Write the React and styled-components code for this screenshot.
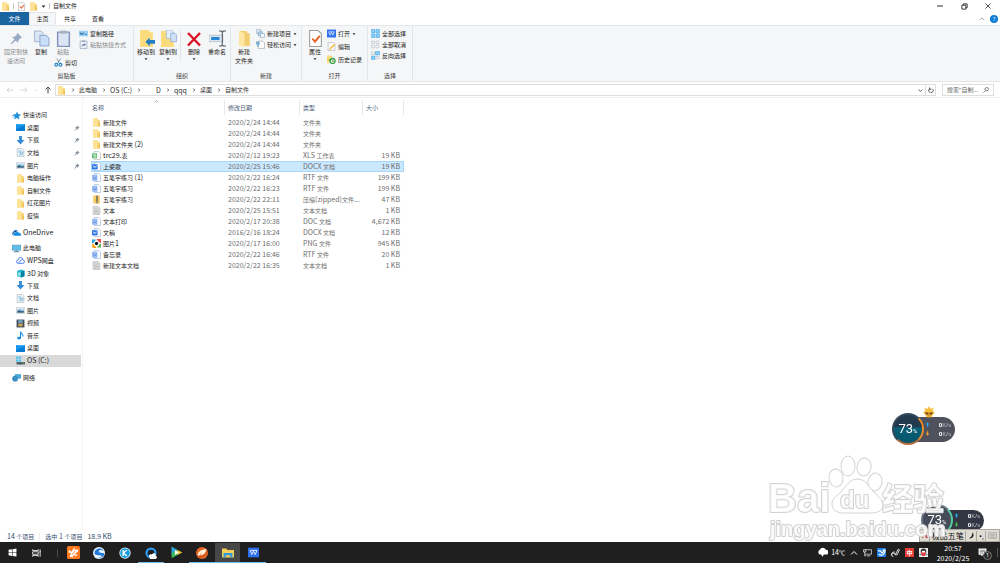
import React, { useState } from "react";
import styled, { createGlobalStyle, css } from "styled-components";

const GlobalStyle = createGlobalStyle`
  * { box-sizing: border-box; }
  body {
    margin: 0;
    background: #ffffff;
    color: #222222;
    font-family: "Open Sans", "Noto Sans CJK SC", sans-serif;
    font-size: 6px;
    line-height: 8px;
    overflow: hidden;
  }
  button, input {
    font: inherit;
    color: inherit;
    background: none;
    border: none;
    padding: 0;
    margin: 0;
  }
  button { white-space: nowrap; }
  svg { display: block; flex: none; }
  ul { list-style: none; margin: 0; padding: 0; }
`;

/* every drawing uses a 16 x 16 box */
const drawings = {
  folder: (
    <>
      <path d="M2 1h8l1 3h3v11H2z" fill="#f5cf69" />
      <path d="M2 1h8v14H2z" fill="#ffe397" />
      <path d="M12 9h2v6h-2z" fill="#e9bb4c" />
    </>
  ),
  bigFolder: (
    <>
      <path d="M3 1h7l1 2h2v12H3z" fill="#f2cf70" />
      <path d="M3 1l5 2v13l-5-1z" fill="#ffe8a4" />
    </>
  ),
  checkDoc: (
    <>
      <path d="M2.500 .5h8l3 3v12h-11z" fill="#fff" stroke="#9b9b9b" />
      <path d="M5 8l2.500 3L12 5.500" fill="none" stroke="#e8622a" strokeWidth="1.800" />
    </>
  ),
  pinBig: <path d="M9 1l6 6-2 .5-2.500 2.500-.5 3.500-3-3L2 15l-1-1 4.500-5-3-3L6 5.500 8.500 3z" fill="#9aaac3" />,
  pin: <path d="M9 1l6 6-2 .5-2 2-.5 3.500-3-3L2 15l-1-1 5-5.500-3-3 3.500-.5 2-2z" fill="#86919c" />,
  copy: (
    <>
      <path d="M1.500 1h6l2 2v8h-8z" fill="#dce8f7" stroke="#98abc8" strokeWidth=".8" />
      <path d="M6.500 5h6l2.500 2.500V15H6.500z" fill="#c8ddf8" stroke="#809ac6" strokeWidth=".8" />
    </>
  ),
  paste: (
    <>
      <path d="M2.500 2h11v13.500h-11z" fill="#dbe6f4" stroke="#8494bd" strokeWidth="1.400" />
      <path d="M5 .5h6v3H5z" fill="#a8b3c5" />
    </>
  ),
  path: (
    <>
      <path d="M0 3h16v10H0z" fill="#9bd0f4" />
      <path d="M2 6l1.500 4L5 7l1.500 3L8 6M9 9.500h1M11 9.500h3" stroke="#1c5f91" fill="none" strokeWidth="1.300" />
    </>
  ),
  shortcut: (
    <>
      <path d="M2 2h12v13H2z" fill="#eef3fa" stroke="#7f91af" />
      <path d="M5 12c0-4 2-5 5-5V5l2 3-3 3V9" fill="#637ca7" />
      <path d="M5 1h6v2H5z" fill="#8c99b0" />
    </>
  ),
  cut: (
    <>
      <path d="M5 1l5 9M12 1L6 10" stroke="#5f7384" strokeWidth="1.300" fill="none" />
      <circle cx="4" cy="12" r="2.500" fill="none" stroke="#1f86c8" strokeWidth="2" />
      <circle cx="11.500" cy="12" r="2.500" fill="none" stroke="#1f86c8" strokeWidth="2" />
    </>
  ),
  moveTo: (
    <>
      <path d="M2 0h8l1 2h3v14H2z" fill="#fbdc7d" />
      <path d="M7 11l4-4v2.500h5v3.500h-5v2.500z" fill="#257fc4" />
    </>
  ),
  copyTo: (
    <>
      <path d="M1 1h7l1 2h4v13H1z" fill="#fbdc7d" />
      <path d="M6 0h5l1.500 1.500V8H6z" fill="#e5effc" stroke="#8faed8" strokeWidth=".6" />
      <path d="M10 3h4l1.500 1.500V11H10z" fill="#cfe1f7" stroke="#7d9ecf" strokeWidth=".6" />
    </>
  ),
  remove: <path d="M2 2l12 12.500M14 2L2 14.500" stroke="#d81324" strokeWidth="2.400" fill="none" />,
  rename: (
    <>
      <path d="M0 5h13v6H0z" fill="#e8eef5" stroke="#9fabb7" strokeWidth=".6" />
      <path d="M2 6.500h8v3H2z" fill="#2887d5" />
      <path d="M9.500 1h2l1 1 1-1H16M9.500 15h2l1-1 1 1H16M12.500 2v12" stroke="#4b545e" fill="none" />
    </>
  ),
  newItem: (
    <>
      <path d="M1 1h8v7H1z" fill="#eef4fa" stroke="#7f9db8" />
      <path d="M4 5h7v7H4z" fill="#b5dbf2" stroke="#5f8eb4" />
      <path d="M8 8h7v7H8z" fill="#f7fafc" stroke="#7f9db8" />
    </>
  ),
  easyAccess: (
    <>
      <path d="M4 2h8l3 3v10H4z" fill="#fff" stroke="#8d979f" />
      <path d="M0 4h6M0 7h4" stroke="#237ab6" strokeWidth="1.500" />
      <path d="M4 12a4 4 0 0 1 3-6" fill="none" stroke="#2a86c8" strokeWidth="1.500" />
    </>
  ),
  wps: (
    <>
      <path d="M0 1h16v14H0z" fill="#2e70ee" />
      <path d="M3 5l2.500 6L8 6l2.500 5L13 5M3 5h10" fill="none" stroke="#fff" strokeWidth="1.200" />
    </>
  ),
  edit: (
    <>
      <path d="M2 1h9l3 3v11H2z" fill="#fff" stroke="#9ba3aa" />
      <path d="M4 14l1-4 8-7 2 2-8 8z" fill="#f4bf4f" />
    </>
  ),
  history: (
    <>
      <path d="M0 1h9v13H0z" fill="#f9d978" />
      <circle cx="10" cy="10.500" r="4.500" fill="#d8efd2" stroke="#39a24a" strokeWidth="2" />
      <path d="M3 7l5 1-3 4z" fill="#39a24a" />
      <path d="M10 7.500V11h3" fill="none" stroke="#246b34" />
    </>
  ),
  selectAll: <path d="M1 1h6v6H1zM9 1h6v6H9zM1 9h6v6H1zM9 9h6v6H9z" fill="#8ad0fb" stroke="#3aa1e6" />,
  selectNone: <path d="M1 2h5v4H1zM9 2h5v4H9zM1 9h5v5H1zM9 9h5v5H9z" fill="#fff" stroke="#a5adb4" />,
  invert: (
    <>
      <path d="M1 9h6v6H1zM8 1h7v6H8z" fill="#8ad0fb" stroke="#3aa1e6" />
      <path d="M1 2h5v4H1zM9 10h5v4H9z" fill="#fff" stroke="#a5adb4" />
    </>
  ),
  star: (
    <>
      <path d="M9 1l2 4.500 5 .5-4 4 1 5-4.500-2.500L4 15l1-5-3-4 5-.5z" fill="#2491da" />
      <path d="M0 8h4M1 11h3" stroke="#2491da" />
    </>
  ),
  desktop: (
    <>
      <path d="M0 2h16v12H0z" fill="#1597ee" />
      <path d="M0 11L16 4v10H0z" fill="#087dd4" />
    </>
  ),
  download: <path d="M5.500 0h5v7H15l-7 8-7-8h4.500z" fill="#348bd6" />,
  document: (
    <>
      <path d="M2 1h9l3 3v11H2z" fill="#f5f8fa" stroke="#9fabb4" />
      <path d="M4 5h5M4 7.500h3M8 7h4v3H8zM5 12h7" stroke="#4b9bc9" fill="none" />
    </>
  ),
  picture: (
    <>
      <path d="M.5 3h15v10H.5z" fill="#f6f9fb" stroke="#a7b2bb" />
      <path d="M2 5h12v3H2z" fill="#a1d0ef" />
      <path d="M2 9l4-2 4 2 4-1v4H2z" fill="#376782" />
    </>
  ),
  oneDrive: (
    <>
      <path d="M2 13a3.500 3.500 0 0 1 0-6 5 5 0 0 1 8-2L6 13z" fill="#0d5ba8" />
      <path d="M5 14a3 3 0 0 1 1-6 4 4 0 0 1 7 1 2.500 2.500 0 0 1 2 5z" fill="#168ade" stroke="#fff" strokeWidth=".7" />
    </>
  ),
  computer: (
    <>
      <path d="M0 2h16v9H0z" fill="#60bce9" stroke="#4287ad" strokeWidth=".8" />
      <path d="M6 11h4v2h3v1.500H3V13h3z" fill="#6b91a8" />
    </>
  ),
  cloud: <path d="M4 13a3 3 0 0 1 0-6c0-6 8-6 8 0a3 3 0 0 1 0 6zM5 12l5-6" fill="none" stroke="#3773ed" strokeWidth="1.600" />,
  cube: (
    <>
      <path d="M2 3l8-2 5 2v10l-5 2-8-2z" fill="#25b9cf" />
      <path d="M9 5l6-2v10l-6 2z" fill="#087f9f" />
      <path d="M4 6h4v6H4z" fill="#a3e9ee" />
    </>
  ),
  video: (
    <>
      <path d="M1 1h14v14H1z" fill="#414b58" />
      <path d="M4 2h8v5H4z" fill="#719fc3" />
      <path d="M4 8h8v5H4z" fill="#c6a35b" />
    </>
  ),
  music: (
    <>
      <ellipse cx="5.500" cy="12.500" rx="3.500" ry="2.500" fill="#1687e0" />
      <path d="M8 12V1c1 4 6 4 4 9" fill="none" stroke="#1687e0" strokeWidth="1.800" />
    </>
  ),
  drive: (
    <>
      <path d="M1 11h15v4H1z" fill="#455158" />
      <path d="M0 1h4v4H0zM5 1h4v4H5zM0 6h4v4H0zM5 6h4v4H5z" fill="#4fc3ef" />
      <path d="M11 13h3" stroke="#6be26b" />
    </>
  ),
  network: (
    <>
      <path d="M5 2h11v8H5z" fill="#4aa9dc" />
      <circle cx="5.500" cy="10" r="5" fill="#277eb6" />
      <path d="M1 9c4-3 5 0 8-2M3 13c3-3 4 0 7-3" fill="none" stroke="#7bc9ec" />
    </>
  ),
  sheetFile: (
    <>
      <path d="M4 1h8l3 3v11H4z" fill="#fff" stroke="#a2aaa2" />
      <path d="M0 4h9v9H0z" fill="#61bd72" />
      <path d="M7 6H3v2.500h4V11H2" fill="none" stroke="#fff" />
    </>
  ),
  docxFile: (
    <>
      <path d="M4 1h8l3 3v11H4z" fill="#fff" stroke="#8fa5ce" />
      <path d="M0 4h10v9H0z" fill="#2870e8" />
      <path d="M2 6l1.500 4L5 7l1.500 3L8 6" fill="none" stroke="#fff" />
    </>
  ),
  rtfFile: (
    <>
      <path d="M4 1h8l3 3v11H4z" fill="#fff" stroke="#8aa6d6" />
      <path d="M1 4h8v9H1z" fill="#a8c7fb" stroke="#719fe9" />
      <path d="M3 6v4h4V6" fill="none" stroke="#4379cd" />
    </>
  ),
  zipFile: (
    <>
      <path d="M2 1h12v14H2z" fill="#f6cf69" />
      <path d="M7 1h4v14H7z" fill="#a89664" />
      <path d="M7.500 3h3M7.500 6h3M7.500 9h3" stroke="#4d5461" />
    </>
  ),
  textFile: (
    <>
      <path d="M2 1h9l3 3v11H2z" fill="#dedede" stroke="#adadad" />
      <path d="M4 5h7M4 7.500h8M4 10h8M4 12.500h8" stroke="#b1b1b1" />
    </>
  ),
  imageFile: (
    <>
      <path d="M0 1h7L4 7H0z" fill="#27a9de" />
      <path d="M8 0h8v7l-5-2z" fill="#f04a40" />
      <path d="M0 8l5 1 3 7H1z" fill="#f8a21c" />
      <path d="M16 8v7H9l2-5z" fill="#5bb952" />
      <circle cx="8" cy="8" r="5" fill="#fff" />
      <circle cx="8" cy="8" r="3" fill="#111" />
    </>
  ),
  windows: <path d="M1 3l6-1v5.500H1zM8 2l7-1v6.500H8zM1 8.500h6V14l-6-1zM8 8.500h7V15l-7-1z" fill="#fff" />,
  taskView: <path d="M1 2v2h9V2M1 14v-2h9v2M1 6h9v4H1zM13 2v12M12 6h2" fill="none" stroke="#fff" strokeWidth="1.300" />,
  uc: (
    <>
      <rect width="16" height="16" rx="2" fill="#ff781e" />
      <path d="M2 5l4 2c1-2 1-4 4-5L9 5l4-1c2 3-1 4-3 5l3 2-3 2-2-2-1 3-4-1 2-4-3-1z" fill="#fff" />
      <path d="M10 6l-4 5M11 10l-2 2" stroke="#f27519" />
    </>
  ),
  browser: (
    <>
      <circle cx="8" cy="8" r="8" fill="#e8f6ff" />
      <path d="M2 8c0-6 9-8 12-3-7-3-9 3-1 3 5 0 0 8-6 6 7-1 5-3 0-3-3 0-5-1-5-3z" fill="#2679d9" />
    </>
  ),
  kugou: (
    <>
      <circle cx="8" cy="8" r="7.500" fill="#fff" />
      <circle cx="8" cy="8" r="6.500" fill="#149bdd" />
      <path d="M5.500 4v8M10.500 4L6 8l4.500 4" stroke="#fff" strokeWidth="1.800" fill="none" />
    </>
  ),
  qqBrowser: (
    <>
      <circle cx="8" cy="8" r="6" fill="none" stroke="#2b9af0" strokeWidth="3" />
      <path d="M6 14c-2-3 1-5 3-4 3-4 7 0 5 2 4 1 1 4-1 4H7z" fill="#fff" />
    </>
  ),
  player: (
    <>
      <path d="M2 1l13 7-13 7z" fill="#39bb55" />
      <path d="M2 1l7 4-5 2-2 4z" fill="#2a9ee8" />
      <path d="M9 5l6 3-6 3z" fill="#f6b52a" />
      <path d="M6 5l5 3-5 3z" fill="#fff" />
    </>
  ),
  orange: (
    <>
      <circle cx="8" cy="8" r="8" fill="#e76522" />
      <path d="M2 10c2-5 6-7 12-7-1 5-4 8-8 8l2-4-4 5z" fill="#fff0d9" />
      <path d="M4 13c5 1 9-3 11-8" fill="none" stroke="#ab391b" />
    </>
  ),
  explorer: (
    <>
      <path d="M0 2h6l1 2h9v10H0z" fill="#f7ce58" />
      <path d="M2 8h12v6h-3v-3H5v3H2z" fill="#2f9bdc" />
    </>
  ),
  weather: <path d="M4 11a4 4 0 0 1 0-7c2-4 7-4 9 0a3.500 3.500 0 0 1 0 7h-3l-2 3-2-3z" fill="#fff" />,
  monitor: <path d="M4 3h11v8H4M7 14h6M1 3h4v4H1zM3 7v7h3" fill="none" stroke="#fff" strokeWidth="1.200" />,
  bluePlug: (
    <>
      <rect width="16" height="16" rx="2" fill="#2181e8" />
      <path d="M2 5h4l3 4c3-1 3-4 2-5l3-1v4c-1 6-7 7-11 4" fill="none" stroke="#fff" strokeWidth="2" />
    </>
  ),
  pen: <path d="M8 11l5-9 2 1-4 9H7a3 3 0 1 0-3 3M7 7C2 7 1 10 1 12" fill="none" stroke="#fff" strokeWidth="1.500" />,
  mascot: (
    <>
      <rect width="16" height="16" rx="1" fill="#f0f0f0" />
      <circle cx="8" cy="6" r="5" fill="#333" />
      <path d="M3 7h10l-2 7H5z" fill="#e43d43" />
      <path d="M5 5h6v3H5z" fill="#fff" />
      <path d="M1 10h3v3H1zM12 10h3v3h-3z" fill="#479d99" />
    </>
  ),
  notice: (
    <>
      <path d="M1 1h14v11H9l-3 3v-3H1z" fill="#fff" />
      <path d="M3 4h10M3 6.500h10M3 9h6" stroke="#333" />
    </>
  ),
  back: <path d="M15 8H2M7 3L2 8l5 5" fill="none" stroke="currentColor" strokeWidth="1.500" />,
  forward: <path d="M1 8h13M9 3l5 5-5 5" fill="none" stroke="currentColor" strokeWidth="1.500" />,
  up: <path d="M8 15V2M3 7l5-5 5 5" fill="none" stroke="currentColor" strokeWidth="2" />,
  right: <path d="M6 4l4 4-4 4" fill="none" stroke="currentColor" strokeWidth="2" />,
  down: <path d="M2 5l6 6 6-6" fill="none" stroke="currentColor" strokeWidth="2.500" />,
  chevronUp: <path d="M2 11l6-6 6 6" fill="none" stroke="currentColor" strokeWidth="2" />,
  caret: <path d="M2 5h12l-6 7z" fill="currentColor" />,
  refresh: <path d="M5 4a6 6 0 1 0 7 1M4 1v5h5" fill="none" stroke="currentColor" strokeWidth="2" />,
  search: <path d="M7 9l-6 6M7 9a4.500 4.500 0 1 1 6 0 4.500 4.500 0 0 1-6 0z" fill="none" stroke="currentColor" strokeWidth="2" />,
  minimize: <path d="M0 8h16" stroke="currentColor" strokeWidth="2.500" />,
  restore: <path d="M2 5h9v9H2zM5 5V2h9v9h-3" fill="none" stroke="currentColor" strokeWidth="2" />,
  close: <path d="M1 1l14 14M15 1L1 15" stroke="currentColor" strokeWidth="2" />,
  moon: <path d="M10 1c6 5 1 15-8 13 6-2 8-6 8-13z" fill="#111" />,
  keyboard: <path d="M1 3h14v10H1zM3 6h10M3 8.500h10M4 11h8" fill="none" stroke="#a4a4a4" strokeWidth="1.500" />,
  arrowUp: <path d="M8 1l6 7h-4v7H6V8H2z" fill="currentColor" />,
  arrowDown: <path d="M8 15l6-7h-4V1H6v7H2z" fill="currentColor" />,
  mascotStar: (
    <>
      <path d="M8 0l2 4 4-2-1 4 3 3-3 2-1 4H4l-1-4-3-2 3-3-1-4 4 2z" fill="#f9bd3a" />
      <path d="M3 9h4v2H4zM9 9h4l-1 2H9zM6 13h4" fill="#754217" stroke="#754217" strokeWidth=".6" />
    </>
  ),
};

const Icon = ({ name, size = 9 }) => (
  <svg width={size} height={size} viewBox="0 0 16 16" aria-hidden="true">
    {drawings[name]}
  </svg>
);

const Screen = styled.div`
  height: 100vh;
  display: flex;
  flex-direction: column;
`;

const TitleBar = styled.header`
  height: 12px;
  flex: none;
  display: flex;
  align-items: center;
  justify-content: space-between;
`;

const QuickTools = styled.div`
  display: flex;
  align-items: center;
  gap: 3px;
  padding-left: 1px;
`;

const Divider = styled.i`
  width: 1px;
  height: ${(p) => p.$height || 6}px;
  background: ${(p) => p.$color || "#c5c5c5"};
  flex: none;
`;

const WindowControls = styled.div`
  display: flex;
  width: 72px;

  button {
    flex: 1;
    display: flex;
    justify-content: center;
  }
`;

const TabBar = styled.nav`
  height: 13px;
  flex: none;
  display: flex;
  align-items: stretch;
`;

const Tab = styled.button`
  width: 28px;
  ${(p) => p.$file && css`
    width: 29px;
    background: #1b64a2;
    color: #ffffff;
  `}
  ${(p) => p.$active && css`
    width: 27px;
    background: #f5f6f7;
    border: 1px solid #e3e4e6;
    border-bottom: none;
  `}
`;

const TabTools = styled.div`
  margin-left: auto;
  display: flex;
  align-items: center;
  gap: 5px;
  padding-right: 2px;
  color: #8a8a8a;
`;

const Help = styled.button`
  width: 8px;
  height: 8px;
  border-radius: 50%;
  background: #0e7bd5;
  color: #ffffff;
  text-align: center;
`;

const Ribbon = styled.section`
  height: 57px;
  flex: none;
  display: flex;
  background: #f5f6f7;
  border-top: 1px solid #e6e7e8;
  border-bottom: 1px solid #e6e7e8;
`;

const Group = styled.div`
  width: ${(p) => p.$width}px;
  display: flex;
  flex-direction: column;
  padding: 3px 0 1px;
  border-right: 1px solid #e4e5e7;
`;

const GroupBody = styled.div`
  flex: 1;
  display: flex;
  align-items: flex-start;
  padding-left: 2px;
`;

const GroupTitle = styled.div`
  text-align: center;
  color: #444444;
`;

const BigButton = styled.button`
  width: ${(p) => p.$width || 22}px;
  display: flex;
  flex-direction: column;
  align-items: center;
  color: ${(p) => (p.$muted ? "#85888c" : "#222222")};

  span {
    line-height: 9px;
    white-space: pre;
  }
`;

const BigIcon = styled.div`
  height: 19px;
  display: flex;
  align-items: center;
`;

const SmallList = styled.div`
  display: flex;
  flex-direction: column;
  gap: ${(p) => p.$gap || 2}px;
  padding-left: ${(p) => p.$indent || 0}px;
`;

const SmallButton = styled.button`
  display: flex;
  align-items: center;
  gap: 2px;
  height: 9px;
  color: ${(p) => (p.$muted ? "#85888c" : "#222222")};
`;

const PasteColumn = styled.div`
  display: flex;
  flex-direction: column;
  align-items: flex-start;
  gap: 1px;
`;

const AddressRow = styled.div`
  flex: none;
  height: 16px;
  display: flex;
  align-items: center;
  padding: 1px 6px 0;
  gap: 6px;
  border-bottom: 1px solid #eeeeee;
`;

const History = styled.div`
  width: 46px;
  margin-right: -3px;
  display: flex;
  align-items: center;
  justify-content: space-between;
  color: #c8c8c8;

  button:last-child {
    color: #4b4b4b;
  }
`;

const AddressBox = styled.div`
  flex: 1;
  height: 12px;
  display: flex;
  align-items: center;
  border: 1px solid #dedede;
  padding-left: 1px;
  color: #333333;
`;

const Crumb = styled.div`
  display: flex;
  align-items: center;
  gap: 3px;
  margin-left: 4px;
  padding-left: ${(p) => p.$indent || 0}px;
`;

const AddressActions = styled.div`
  margin-left: auto;
  display: flex;
  align-items: center;
  gap: 2px;
  padding-right: 1px;
`;

const SearchBox = styled.label`
  width: 52px;
  height: 12px;
  display: flex;
  align-items: center;
  padding: 0 4px;
  border: 1px solid #dedede;
  color: #555555;

  input {
    flex: 1;
    min-width: 0;
    outline: none;
  }
  input::placeholder {
    color: #666666;
    opacity: 1;
  }
`;

const Main = styled.main`
  flex: 1;
  min-height: 0;
  display: flex;
`;

const Sidebar = styled.nav`
  width: 83px;
  flex: none;
  padding: 11px 1px 0 0;
  display: flex;
  flex-direction: column;
  gap: 4px;
  border-right: 1px solid #f4f4f4;
`;

const Tree = styled.ul`
  height: ${(p) => p.$height}px;
  flex: none;
  display: flex;
  flex-direction: column;

  li {
    flex: 1;
    display: flex;
  }
`;

const TreeItem = styled.button`
  flex: 1;
  display: flex;
  align-items: center;
  gap: 2px;
  padding: 0 0 0 ${(p) => (p.$root ? 12 : 16)}px;
  background: ${(p) => (p.$active ? "#d9d9d9" : "none")};

  svg:nth-of-type(2) {
    margin: 0 1px 0 auto;
  }
`;

const FileArea = styled.section`
  flex: 1;
  padding-left: 8px;
`;

const FileTable = styled.table`
  width: 313px;
  table-layout: fixed;
  border-collapse: collapse;
`;

const HeadCell = styled.th`
  width: ${(p) => p.$width}px;
  height: 19px;
  padding: 0 0 0 ${(p) => p.$pad || 3}px;
  position: relative;
  text-align: left;
  font-weight: 400;
  color: #4c607a;
  background: linear-gradient(#e8e8e8, #e8e8e8) right center / 1px 15px no-repeat;
`;

const SortMark = styled.span`
  position: absolute;
  left: 63px;
  top: 1px;
  color: #777777;
`;

const FileRow = styled.tr`
  height: 11px;
  cursor: default;
  background: ${(p) => (p.$selected ? "#cce8ff" : "none")};
  outline: ${(p) => (p.$selected ? "1px solid #a5d6fb" : "none")};
  outline-offset: -1px;

  td {
    height: 11px;
    padding: 0 0 0 3px;
    color: #6d6d6d;
    white-space: nowrap;
  }
  td:nth-child(1) {
    padding-left: 1px;
  }
  td:nth-child(4) {
    text-align: right;
    padding-right: 4px;
  }
`;

const FileName = styled.div`
  display: flex;
  align-items: center;
  gap: 2px;
  color: #1b1b1b;
`;

const Latin = styled.span`
  font-family: "Noto Sans CJK SC", sans-serif;
  font-size: 7px;
`;

const StatusBar = styled.footer`
  height: 12px;
  flex: none;
  display: flex;
  align-items: center;
  gap: 5px;
  padding-left: 7px;
  color: #354b70;
`;

const Taskbar = styled.footer`
  height: 21px;
  flex: none;
  display: flex;
  align-items: stretch;
  background: #1f1f1f;
  color: #ffffff;
`;

const StartArea = styled.div`
  width: 61px;
  display: flex;
  align-items: center;
  padding-left: 8px;
  gap: 15px;
`;

const AppList = styled.div`
  width: 205px;
  display: flex;
`;

const TaskButton = styled.button`
  flex: 1;
  display: flex;
  align-items: center;
  justify-content: center;
  background: ${(p) => (p.$active ? "#474747" : "none")};
  border-bottom: 1px solid ${(p) => (p.$open ? "#76b9ed" : "transparent")};
  border-top: 1px solid transparent;
  background-clip: padding-box;
`;

const Tray = styled.div`
  margin-left: auto;
  display: flex;
  align-items: center;
  gap: 5px;
  padding-right: 2px;
`;

const Weather = styled.button`
  display: flex;
  align-items: center;
  gap: 3px;
`;

const ChineseMode = styled.button`
  width: 9px;
  height: 9px;
  background: #e83c34;
  color: #ffffff;
  font-weight: 700;
`;

const Clock = styled.time`
  width: 40px;
  text-align: center;
  font-family: "Noto Sans CJK SC", sans-serif;
  font-size: 7px;
  line-height: 10px;
`;

const NoticeButton = styled.button`
  position: relative;
  padding-right: 10px;
  border-right: 1px solid #555555;
`;

const NoticeCount = styled.span`
  position: absolute;
  left: 5px;
  top: 3px;
  width: 9px;
  height: 9px;
  border: 1px solid #777777;
  border-radius: 50%;
  background: #292929;
  line-height: 7px;
  text-align: center;
`;

const Gauge = styled.aside`
  position: fixed;
  right: ${(p) => p.$right}px;
  bottom: ${(p) => p.$bottom}px;
  display: flex;
  align-items: center;
  color: #ffffff;
`;

const Dial = styled.div`
  width: 32px;
  height: 32px;
  z-index: 1;
  border-radius: 50%;
  border: 2px solid ${(p) => (p.$dim ? "#687784" : "#35495b")};
  border-right-color: ${(p) => (p.$dim ? "#55c9a0" : "#e98b2b")};
  border-bottom-color: ${(p) => (p.$dim ? "#687784" : "#b46c38")};
  background: ${(p) => (p.$dim ? "#454b59" : "linear-gradient(#23394c 42%, #086078 46%, #07546c)")};
  display: flex;
  align-items: center;
  justify-content: center;
  font-family: Roboto, sans-serif;
  font-size: 13px;

  small {
    font-size: 6px;
    padding-top: 4px;
  }
`;

const Speeds = styled.div`
  width: 47px;
  height: ${(p) => (p.$dim ? 21 : 25)}px;
  margin-left: -16px;
  padding: 0 4px 0 17px;
  border-radius: 0 13px 13px 0;
  background: ${(p) => (p.$dim ? "#333743" : "#4f515d")};
  display: flex;
  flex-direction: column;
  justify-content: center;
  gap: 1px;
  color: #c5c7cc;

  div {
    display: flex;
    align-items: center;
    justify-content: space-between;
  }
  div:first-child svg { color: #28a5e9; }
  div:last-child svg { color: ${(p) => (p.$dim ? "#46bd58" : "#f39a28")}; }
  b { font-weight: 700; color: #ffffff; }
`;

const Companion = styled.span`
  position: absolute;
  left: 31px;
  top: -7px;
`;

const ImeBar = styled.aside`
  position: fixed;
  right: 0;
  bottom: 21px;
  width: 81px;
  height: 13px;
  display: flex;
  align-items: center;
  justify-content: space-between;
  padding: 0 2px;
  background: #dedbd3;
  border: 1px solid #aaa79e;
  color: #111111;
  font-size: 8px;

  strong {
    color: #c52530;
    font-family: "Liberation Serif", serif;
  }
`;

const Watermark = styled.div`
  position: fixed;
  right: 54px;
  bottom: 20px;
  pointer-events: none;
`;

const WatermarkArt = styled.svg`
  width: 178px;
  height: 88px;
  overflow: visible;

  text {
    font-family: "Liberation Sans", "Noto Sans CJK SC", sans-serif;
    font-weight: 700;
    paint-order: stroke;
    stroke: #d2d2d2;
    stroke-width: 2px;
    stroke-linejoin: round;
    fill: rgba(255, 255, 255, 0.85);
  }
`;

const quickItems = [
  { icon: "star", label: "快速访问", root: true },
  { icon: "desktop", label: "桌面", pinned: true },
  { icon: "download", label: "下载", pinned: true },
  { icon: "document", label: "文档", pinned: true },
  { icon: "picture", label: "图片", pinned: true },
  { icon: "folder", label: "电脑操作" },
  { icon: "folder", label: "自制文件" },
  { icon: "folder", label: "红花图片" },
  { icon: "folder", label: "疫情" },
];

const computerItems = [
  { icon: "computer", label: "此电脑", root: true },
  { icon: "cloud", label: "WPS网盘" },
  { icon: "cube", label: "3D 对象" },
  { icon: "download", label: "下载" },
  { icon: "document", label: "文档" },
  { icon: "picture", label: "图片" },
  { icon: "video", label: "视频" },
  { icon: "music", label: "音乐" },
  { icon: "desktop", label: "桌面" },
  { icon: "drive", label: "OS (C:)", active: true },
];

const files = [
  ["folder", "新建文件", "2020/2/24 14:44", "文件夹", ""],
  ["folder", "新建文件夹", "2020/2/24 14:44", "文件夹", ""],
  ["folder", "新建文件夹 (2)", "2020/2/24 14:44", "文件夹", ""],
  ["sheetFile", "trc29.表", "2020/2/12 19:23", "XLS 工作表", "19 KB"],
  ["docxFile", "上梁歌", "2020/2/25 15:46", "DOCX 文档", "19 KB"],
  ["rtfFile", "五笔字练习 (1)", "2020/2/22 16:24", "RTF 文件", "199 KB"],
  ["rtfFile", "五笔字练习", "2020/2/22 16:23", "RTF 文件", "199 KB"],
  ["zipFile", "五笔字练习", "2020/2/22 22:11", "压缩(zipped)文件...", "47 KB"],
  ["textFile", "文本", "2020/2/25 15:51", "文本文档", "1 KB"],
  ["rtfFile", "文本打印", "2020/2/17 20:38", "DOC 文档", "4,672 KB"],
  ["docxFile", "文稿", "2016/2/16 18:24", "DOCX 文档", "12 KB"],
  ["imageFile", "图片1", "2020/2/17 16:00", "PNG 文件", "945 KB"],
  ["rtfFile", "备忘录", "2020/2/22 16:46", "RTF 文件", "20 KB"],
  ["textFile", "新建文本文档", "2020/2/22 16:35", "文本文档", "1 KB"],
];

const taskApps = [
  { icon: "uc", label: "UC", size: 13 },
  { icon: "browser", label: "浏览器", size: 12 },
  { icon: "kugou", label: "酷狗", size: 12 },
  { icon: "qqBrowser", label: "QQ浏览器", size: 12, open: true },
  { icon: "player", label: "播放器", size: 13 },
  { icon: "orange", label: "视频", size: 12, open: true },
  { icon: "explorer", label: "文件资源管理器", size: 12, open: true, active: true },
  { icon: "wps", label: "WPS", size: 11, open: true },
];

/* latin letters and digits run one size larger than the Chinese text */
function Label({ text }) {
  return (
    <span>
      {text.split(/([\x20-\x7e]+)/).map((part, i) => (i % 2 ? <Latin key={i}>{part}</Latin> : part))}
    </span>
  );
}

function Large({ icon, label, caret, size = 17, width, muted }) {
  return (
    <BigButton $width={width} $muted={muted}>
      <BigIcon><Icon name={icon} size={size} /></BigIcon>
      <span>{label}</span>
      {caret && <Icon name="caret" size={4} />}
    </BigButton>
  );
}

function Small({ icon, label, caret, muted }) {
  return (
    <SmallButton $muted={muted}>
      <Icon name={icon} />
      {label}
      {caret && <Icon name="caret" size={4} />}
    </SmallButton>
  );
}

function TreeList({ items, height }) {
  return (
    <Tree $height={height}>
      {items.map((item) => (
        <li key={item.label}>
          <TreeItem $root={item.root} $active={item.active}>
            <Icon name={item.icon} />
            <Label text={item.label} />
            {item.pinned && <Icon name="pin" size={6} />}
          </TreeItem>
        </li>
      ))}
    </Tree>
  );
}

function RibbonBar() {
  return (
    <Ribbon>
      <Group $width={134}>
        <GroupBody>
          <Large icon="pinBig" label={"固定到快\n速访问"} width={28} size={13} muted />
          <Large icon="copy" label="复制" />
          <PasteColumn>
            <Large icon="paste" label="粘贴" muted />
            <SmallList $indent={2}>
              <Small icon="cut" label="剪切" />
            </SmallList>
          </PasteColumn>
          <SmallList $indent={2}>
            <Small icon="path" label="复制路径" />
            <Small icon="shortcut" label="粘贴快捷方式" muted />
          </SmallList>
        </GroupBody>
        <GroupTitle>剪贴板</GroupTitle>
      </Group>
      <Group $width={97}>
        <GroupBody>
          <Large icon="moveTo" label="移动到" width={20} caret />
          <Large icon="copyTo" label="复制到" width={24} caret />
          <Divider $height={32} $color="#e1e3e5" />
          <Large icon="remove" label="删除" width={26} size={16} caret />
          <Large icon="rename" label="重命名" width={20} />
        </GroupBody>
        <GroupTitle>组织</GroupTitle>
      </Group>
      <Group $width={71}>
        <GroupBody>
          <Large icon="bigFolder" label={"新建\n文件夹"} />
          <SmallList $indent={1}>
            <Small icon="newItem" label="新建项目" caret />
            <Small icon="easyAccess" label="轻松访问" caret />
          </SmallList>
        </GroupBody>
        <GroupTitle>新建</GroupTitle>
      </Group>
      <Group $width={66}>
        <GroupBody>
          <Large icon="checkDoc" label="属性" caret />
          <SmallList $gap={4} $indent={1}>
            <Small icon="wps" label="打开" caret />
            <Small icon="edit" label="编辑" />
            <Small icon="history" label="历史记录" />
          </SmallList>
        </GroupBody>
        <GroupTitle>打开</GroupTitle>
      </Group>
      <Group $width={45}>
        <GroupBody>
          <SmallList $indent={1}>
            <Small icon="selectAll" label="全部选择" />
            <Small icon="selectNone" label="全部取消" />
            <Small icon="invert" label="反向选择" />
          </SmallList>
        </GroupBody>
        <GroupTitle>选择</GroupTitle>
      </Group>
    </Ribbon>
  );
}

function SpeedGauge({ right, bottom, dim }) {
  return (
    <Gauge $right={right} $bottom={bottom}>
      <Dial $dim={dim}>73<small>%</small></Dial>
      <Speeds $dim={dim}>
        <div><Icon name="arrowUp" size={5} /><span><b>0</b>K/s</span></div>
        <div><Icon name="arrowDown" size={5} /><span><b>0</b>K/s</span></div>
      </Speeds>
      {!dim && <Companion><Icon name="mascotStar" size={12} /></Companion>}
    </Gauge>
  );
}

export default function App() {
  const [selected, setSelected] = useState(4);
  const [query, setQuery] = useState("");

  return (
    <Screen>
      <GlobalStyle />
      <TitleBar>
        <QuickTools>
          <Icon name="folder" />
          <Divider />
          <Icon name="checkDoc" />
          <Icon name="folder" />
          <Icon name="caret" size={5} />
          <Divider />
          <span>自制文件</span>
        </QuickTools>
        <WindowControls>
          <button aria-label="最小化"><Icon name="minimize" size={6} /></button>
          <button aria-label="还原"><Icon name="restore" size={7} /></button>
          <button aria-label="关闭"><Icon name="close" size={6} /></button>
        </WindowControls>
      </TitleBar>
      <TabBar>
        <Tab $file>文件</Tab>
        <Tab $active>主页</Tab>
        <Tab>共享</Tab>
        <Tab>查看</Tab>
        <TabTools>
          <button aria-label="折叠功能区"><Icon name="chevronUp" size={6} /></button>
          <Help>?</Help>
        </TabTools>
      </TabBar>
      <RibbonBar />
      <AddressRow>
        <History>
          <button aria-label="后退"><Icon name="back" size={8} /></button>
          <button aria-label="前进"><Icon name="forward" size={8} /></button>
          <button aria-label="最近位置"><Icon name="down" size={4} /></button>
          <button aria-label="向上"><Icon name="up" size={8} /></button>
        </History>
        <AddressBox>
          <Icon name="folder" />
          <Crumb><Icon name="right" size={6} /><button>此电脑</button></Crumb>
          <Crumb><Icon name="right" size={6} /><button><Label text="OS (C:)" /></button></Crumb>
          <Crumb><Icon name="right" size={6} /></Crumb>
          <Crumb $indent={10}><button><Label text="D" /></button></Crumb>
          <Crumb><Icon name="right" size={6} /><button><Label text="qqq" /></button></Crumb>
          <Crumb><Icon name="right" size={6} /><button>桌面</button></Crumb>
          <Crumb><Icon name="right" size={6} /><button>自制文件</button></Crumb>
          <AddressActions>
            <button aria-label="历史"><Icon name="down" size={5} /></button>
            <Divider $height={10} $color="#dedede" />
            <button aria-label="刷新"><Icon name="refresh" size={6} /></button>
          </AddressActions>
        </AddressBox>
        <SearchBox>
          <input
            aria-label="搜索"
            placeholder={'搜索"自制...'}
            value={query}
            onChange={(e) => setQuery(e.target.value)}
          />
          <Icon name="search" size={6} />
        </SearchBox>
      </AddressRow>
      <Main>
        <Sidebar>
          <TreeList items={quickItems} height={113} />
          <TreeList items={[{ icon: "oneDrive", label: "OneDrive", root: true }]} height={12} />
          <TreeList items={computerItems} height={125} />
          <TreeList items={[{ icon: "network", label: "网络", root: true }]} height={13} />
        </Sidebar>
        <FileArea>
          <FileTable>
            <thead>
              <tr>
                <HeadCell $width={134} $pad={1}>
                  名称
                  <SortMark><Icon name="chevronUp" size={5} /></SortMark>
                </HeadCell>
                <HeadCell $width={75}>修改日期</HeadCell>
                <HeadCell $width={63}>类型</HeadCell>
                <HeadCell $width={41}>大小</HeadCell>
              </tr>
            </thead>
            <tbody>
              {files.map(([icon, name, date, type, size], i) => (
                <FileRow key={i} $selected={i === selected} onClick={() => setSelected(i)}>
                  <td><FileName><Icon name={icon} /><Label text={name} /></FileName></td>
                  <td><Label text={date} /></td>
                  <td><Label text={type} /></td>
                  <td><Label text={size} /></td>
                </FileRow>
              ))}
            </tbody>
          </FileTable>
        </FileArea>
      </Main>
      <StatusBar>
        <Label text="14 个项目" />
        <Divider $color="#ececec" />
        <Label text="选中 1 个项目" />
        <Label text="18.9 KB" />
      </StatusBar>
      <Taskbar>
        <StartArea>
          <button aria-label="开始"><Icon name="windows" size={9} /></button>
          <button aria-label="任务视图"><Icon name="taskView" size={10} /></button>
          <Divider $height={8} $color="#4a4a4a" />
        </StartArea>
        <AppList>
          {taskApps.map((app) => (
            <TaskButton key={app.label} aria-label={app.label} $open={app.open} $active={app.active}>
              <Icon name={app.icon} size={app.size} />
            </TaskButton>
          ))}
        </AppList>
        <Tray>
          <Weather><Icon name="weather" size={11} /><Label text="14℃" /></Weather>
          <button aria-label="显示隐藏的图标"><Icon name="chevronUp" size={8} /></button>
          <Icon name="monitor" size={9} />
          <Icon name="bluePlug" size={9} />
          <Icon name="pen" size={9} />
          <ChineseMode>中</ChineseMode>
          <Icon name="mascot" size={9} />
          <Clock>20:57<br />2020/2/25</Clock>
          <NoticeButton aria-label="通知">
            <Icon name="notice" size={9} />
            <NoticeCount>1</NoticeCount>
          </NoticeButton>
        </Tray>
      </Taskbar>
      <SpeedGauge right={45} bottom={118} />
      <SpeedGauge right={16} bottom={27} dim />
      <ImeBar>
        <strong>A</strong>
        <Divider $height={10} $color="#aaa79e" />
        <span>极品五笔</span>
        <Divider $height={10} $color="#aaa79e" />
        <Icon name="moon" size={7} />
        <Divider $height={10} $color="#aaa79e" />
        <span>•,</span>
        <Divider $height={10} $color="#aaa79e" />
        <Icon name="keyboard" size={9} />
      </ImeBar>
      <Watermark>
        <WatermarkArt viewBox="0 0 178 88">
          <g fill="#ffffff" fillOpacity=".85" stroke="#d2d2d2" strokeWidth="1">
            <ellipse cx="68" cy="23" rx="7" ry="9" transform="rotate(-8 68 23)" />
            <ellipse cx="80" cy="11" rx="7" ry="10" />
            <ellipse cx="96" cy="12" rx="7" ry="9" transform="rotate(10 96 12)" />
            <ellipse cx="107" cy="27" rx="7" ry="9" transform="rotate(10 107 27)" />
            <path d="M89 24c9 0 11 7 17 13 6 6 9 9 9 13 0 6-6 8-12 8H76c-7 0-12-3-12-9 0-5 4-8 9-12 5-5 8-13 16-13z" />
          </g>
          <text x="0" y="57" fontSize="40">Bai</text>
          <text x="72" y="53" fontSize="24">du</text>
          <text x="114" y="55" fontSize="31">经验</text>
          <text x="2" y="81" fontSize="20">jingyan.baidu.com</text>
        </WatermarkArt>
      </Watermark>
    </Screen>
  );
}
